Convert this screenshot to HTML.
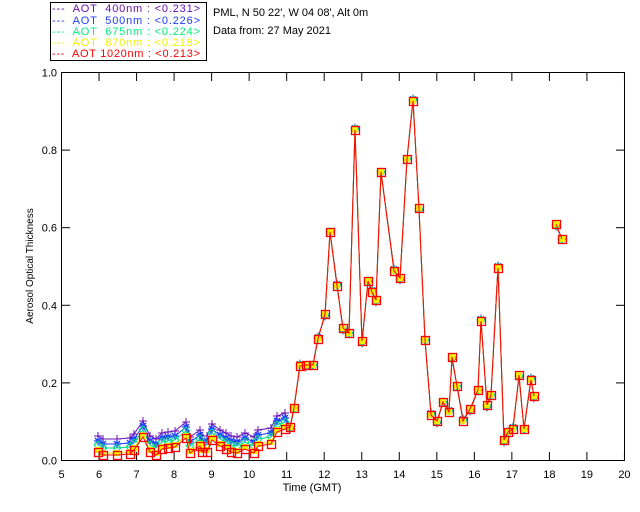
<!DOCTYPE html>
<html><head><style>
body{margin:0;background:#fff;width:640px;height:512px;overflow:hidden}
svg{display:block;font-family:"Liberation Sans",sans-serif}
</style></head><body>
<svg id="s" width="640" height="512" viewBox="0 0 640 512" font-size="11">
<rect x="50.5" y="2.5" width="156" height="58" fill="#fff" stroke="#000"/>
<g font-size="11">
<text x="52" y="12" fill="#6a0fb4" xml:space="preserve" textLength="148" lengthAdjust="spacing">---  AOT  400nm : &lt;0.231&gt;</text>
<text x="52" y="24" fill="#1e3cff" xml:space="preserve" textLength="148" lengthAdjust="spacing">---  AOT  500nm : &lt;0.226&gt;</text>
<text x="52" y="35" fill="#00f07a" xml:space="preserve" textLength="148" lengthAdjust="spacing">---  AOT  675nm : &lt;0.224&gt;</text>
<text x="52" y="46" fill="#f0f000" xml:space="preserve" textLength="148" lengthAdjust="spacing">---  AOT  870nm : &lt;0.218&gt;</text>
<text x="52" y="57" fill="#ff0000" xml:space="preserve" textLength="148" lengthAdjust="spacing">---  AOT 1020nm : &lt;0.213&gt;</text>
</g>
<text x="213" y="16">PML, N 50 22', W 04 08', Alt 0m</text>
<text x="213" y="34">Data from: 27 May 2021</text>
<rect x="61.5" y="72.5" width="563" height="388" fill="none" stroke="#000"/>
<g id="ax" stroke="#000" fill="none"></g>
<g id="lab" font-size="11"></g>
<text x="312" y="491" text-anchor="middle" font-size="11">Time (GMT)</text>
<text transform="translate(33,266) rotate(-90)" text-anchor="middle" font-size="10">Aerosol Optical Thickness</text>
<g id="data"></g>
</svg>
<script>
var NS="http://www.w3.org/2000/svg";
function el(p,t,a,txt){var e=document.createElementNS(NS,t);for(var k in a)e.setAttribute(k,a[k]);if(txt!=null)e.textContent=txt;p.appendChild(e);return e;}
var ax=document.getElementById('ax'),lab=document.getElementById('lab'),d=document.getElementById('data');
for(var h=5;h<=20;h++){var x=61.5+(h-5)*37.53;
 el(ax,'line',{x1:x,y1:460,x2:x,y2:452});el(ax,'line',{x1:x,y1:73,x2:x,y2:81});
 el(lab,'text',{x:x,y:478,'text-anchor':'middle'},String(h));}
for(var i=0;i<=5;i++){var y=460.5-i*77.6;
 el(ax,'line',{x1:62,y1:y,x2:70,y2:y});el(ax,'line',{x1:624,y1:y,x2:616,y2:y});
 el(lab,'text',{x:57,y:y+4,'text-anchor':'end'},(i*0.2).toFixed(1));}
var P=[[98,452],[103,455],[117,455],[130,454],[134,450],[143,437],[150,452],[156,455],[162,449],[168,448],[175,447],[186,438],[190,453],[200,446],[202,452],[207,452],[212,440],[220,446],[226,449],[231,452],[237,453],[245,449],[254,453],[258,446],[271,444],[277,432],[285,429],[290,427],[294,408],[300,366],[306,365],[313,365],[318,339],[325,314],[330,232],[337,286],[343,328],[349,333],[355,130],[362,341],[368,281],[372,292],[376,300],[381,172],[394,271],[400,278],[407,159],[413,101],[419,208],[425,340],[431,415],[437,421],[443,402],[449,412],[452,357],[457,386],[463,421],[470,409],[478,390],[481,321],[487,405],[491,395],[498,268],[504,440],[508,432],[513,429],[519,375],[524,429],[531,380],[534,396]];
var P2=[[556,224],[562,239]];
var S=[{c:'#6a0fb4',o:-16,m:'+'},{c:'#1e3cff',o:-11,m:'*'},{c:'#00e080',o:-7,m:'d'},{c:'#f0f000',o:-2,m:'s'},{c:'#ff0000',o:0,m:'r'}];
S.forEach(function(s,k){
 [P,P2].forEach(function(arr){
  var pts=arr.map(function(p,i){var off=p[0]<290?s.o:(s.o*0.15*((i%3)-1));return [p[0],p[1]+off];});
  el(d,'polyline',{points:pts.map(function(p){return p.join(',')}).join(' '),fill:'none',stroke:s.c,'stroke-width':1});
  pts.forEach(function(p){var x=p[0],y=p[1];
   if(s.m=='+'){el(d,'path',{d:'M'+(x-4)+' '+y+'h8M'+x+' '+(y-4)+'v8',stroke:s.c,fill:'none'});}
   else if(s.m=='*'){el(d,'path',{d:'M'+(x-4)+' '+y+'h8M'+x+' '+(y-4)+'v8M'+(x-3)+' '+(y-3)+'l6 6M'+(x+3)+' '+(y-3)+'l-6 6',stroke:s.c,fill:'none','stroke-width':1.3});}
   else if(s.m=='d'){el(d,'path',{d:'M'+x+' '+(y-4)+'l4 4l-4 4l-4 -4z',stroke:s.c,fill:'none'});}
   else if(s.m=='s'){el(d,'rect',{x:x-3,y:y-3,width:6,height:6,fill:s.c});}
   else {el(d,'rect',{x:x-3.5,y:y-3.5,width:8,height:8,fill:'none',stroke:s.c,'stroke-width':1.3});}
  });
 });
});
</script>
</body></html>
